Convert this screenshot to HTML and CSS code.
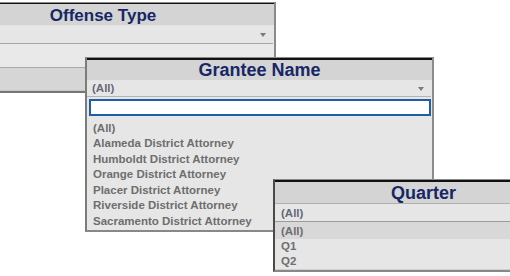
FILE: index.html
```html
<!DOCTYPE html>
<html>
<head>
<meta charset="utf-8">
<link rel="stylesheet" href="styles.css">
</head>
<body>
<div class="canvas">
  <section class="panel p-offense">
    <h2 class="title">Offense Type</h2>
    <div class="dropdown"><span class="value"></span><span class="caret"></span></div>
    <div class="blank"></div>
    <div class="foot"></div>
  </section>

  <section class="panel p-grantee">
    <h2 class="title">Grantee Name</h2>
    <div class="dropdown"><span class="value">(All)</span><span class="caret"></span></div>
    <div class="search"></div>
    <ul class="list">
      <li>(All)</li>
      <li>Alameda District Attorney</li>
      <li>Humboldt District Attorney</li>
      <li>Orange District Attorney</li>
      <li>Placer District Attorney</li>
      <li>Riverside District Attorney</li>
      <li>Sacramento District Attorney</li>
    </ul>
  </section>

  <section class="panel p-quarter">
    <h2 class="title">Quarter</h2>
    <div class="dropdown"><span class="value">(All)</span></div>
    <ul class="list">
      <li class="sel">(All)</li>
      <li>Q1</li>
      <li>Q2</li>
    </ul>
  </section>
</div>
</body>
</html>
```

FILE: styles.css
```css
body {
  margin: 0;
  background: #ffffff;
  font-family: "Liberation Sans", Arial, sans-serif;
}

.canvas {
  position: relative;
  width: 510px;
  height: 276px;
  overflow: hidden;
}

.panel {
  position: absolute;
  box-sizing: border-box;
  background: #e6e6e6;
  border: 1px solid #8a8a8a;
  display: flex;
  flex-direction: column;
}

.title {
  margin: 0;
  background: #d4d4d4;
  color: #172766;
  font-weight: bold;
  text-align: center;
  font-size: 18px;
  white-space: nowrap;
}

.dropdown {
  display: flex;
  align-items: center;
  justify-content: space-between;
  background: #e6e6e6;
  font-size: 11.5px;
  font-weight: bold;
  color: #686878;
}

.caret {
  width: 0;
  height: 0;
  border-left: 3px solid transparent;
  border-right: 3px solid transparent;
  border-top: 4px solid #7a7a7a;
  margin-right: 7px;
}

.list {
  list-style: none;
  margin: 0;
  font-size: 11.5px;
  font-weight: bold;
  color: #6e6e6e;
  white-space: nowrap;
}

/* Offense Type */
.p-offense {
  left: -69px;
  top: 2px;
  width: 345px;
  border-right: 2px solid #8a8a8a;
  border-bottom: 2px solid #777777;
}
.p-offense .title {
  font-size: 17px;
  border-top: 1px solid #111111;
  padding-top: 2px;
  line-height: 19px;
  border-bottom: 1px solid #e2e2e2;
}
.p-offense .dropdown {
  height: 17px;
  border-bottom: 1px solid #a8a8a8;
  margin-right: 1px;
}
.p-offense .blank {
  height: 23px;
  background: #e9e9e9;
  border-bottom: 1px solid #a8a8a8;
}
.p-offense .foot {
  height: 22px;
  background: #d6d6d6;
  border-bottom: 1px solid #c8c8c8;
}

/* Grantee Name */
.p-grantee {
  left: 85px;
  top: 57px;
  width: 349px;
  border-left: 2px solid #7c7c7c;
  border-right: 2px solid #8c8c8c;
  border-bottom: 2px solid #888888;
}
.p-grantee .title {
  border-top: 2px solid #111111;
  line-height: 20px;
  border-bottom: 1px solid #e4e4e4;
}
.p-grantee .dropdown {
  line-height: 15px;
  padding-left: 5px;
  margin-right: 1px;
  border-bottom: 1px solid #b4b4b4;
}
.p-grantee .search {
  box-sizing: border-box;
  height: 17px;
  margin: 2px 1px 0 2px;
  background: #ffffff;
  border: 2px solid #1d5ea8;
}
.p-grantee .list {
  margin-top: 2px;
  padding: 2.5px 0 0 6px;
  line-height: 15.6px;
}
.p-grantee .list li {
  height: 15.6px;
}

/* Quarter */
.p-quarter {
  left: 273px;
  top: 179px;
  width: 300px;
  border-left: 2px solid #4a4a4a;
  border-bottom: 2px solid #888888;
}
.p-quarter .title {
  border-top: 2px solid #111111;
  padding-top: 1px;
  line-height: 20px;
  border-bottom: 1px solid #b0b0b0;
}
.p-quarter .dropdown {
  padding: 1px 0 0 6px;
  line-height: 16px;
  border-bottom: 1px solid #9c9c9c;
}
.p-quarter .list {
  padding: 0 0 0.5px 0;
  line-height: 15px;
  border-bottom: 1px solid #cfcfcf;
}
.p-quarter .list li {
  padding-left: 6px;
}
.p-quarter .list li.sel {
  padding-top: 1.5px;
  background: #d8d8d8;
}
```
